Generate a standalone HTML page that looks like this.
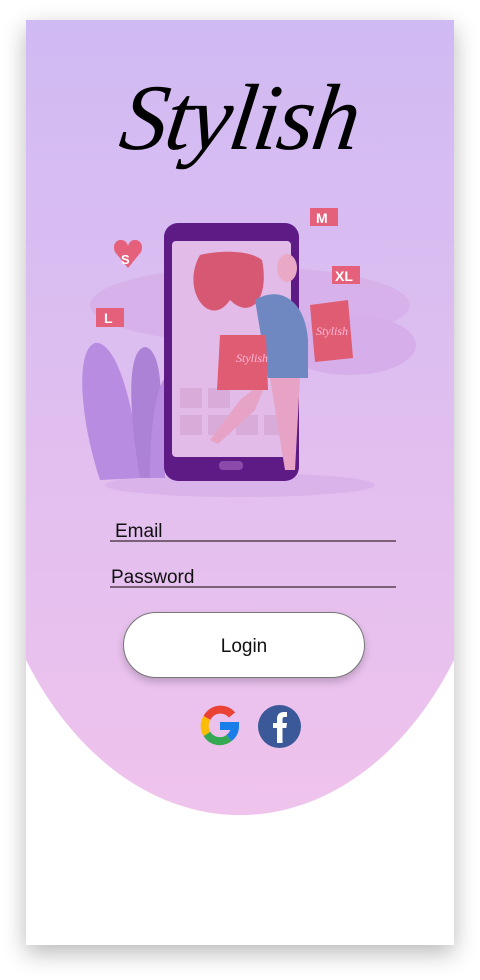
<!DOCTYPE html>
<html><head><meta charset="utf-8"><style>
html,body{margin:0;padding:0;background:#fff;width:480px;height:980px;overflow:hidden;font-family:"Liberation Sans",sans-serif}
.card{position:absolute;left:26px;top:20px;width:428px;height:925px;background:#fff;box-shadow:0 8px 22px rgba(0,0,0,.28);overflow:hidden}
.bg{position:absolute;left:0;top:0;width:428px;height:800px;background:linear-gradient(#d0baf3,#efc3ec);clip-path:path("M0 0 H428 V640 A260 359 0 0 1 0 640 Z")}
.logo{position:absolute;left:0;width:428px;top:44px;text-align:center;font-family:"Liberation Serif",serif;font-style:italic;font-size:94px;color:#000;letter-spacing:-2px;transform:skewX(-8deg)}
.lbl{position:absolute;font-size:19px;color:#111}
.line{position:absolute;left:84px;width:286px;height:2px;background:#7a6178}
.btn{position:absolute;left:97px;top:592px;width:240px;height:64px;border:1px solid #777;border-radius:33px;background:#fff;box-shadow:0 4px 8px rgba(0,0,0,.2);text-align:center;line-height:68px;font-size:19px;color:#111}
</style></head><body>
<div class="card">
<div class="bg"></div>
<div class="logo">Stylish</div>
<svg style="position:absolute;left:54px;top:180px" width="340" height="300" viewBox="80 200 340 300">
<ellipse cx="250" cy="305" rx="160" ry="38" fill="#d6aee9" opacity=".8"/>
<ellipse cx="350" cy="345" rx="66" ry="30" fill="#d6aee9"/>
<ellipse cx="240" cy="485" rx="135" ry="12" fill="#d9b3ea"/>
<path d="M100 480 C80 420 75 350 95 343 C115 340 135 400 140 478Z" fill="#b88ce0"/>
<path d="M140 478 C130 420 125 350 145 347 C165 350 165 420 150 478Z" fill="#ab82d6"/>
<path d="M150 478 C150 430 155 390 165 378 L165 478Z" fill="#b88ce0"/>
<rect x="164" y="223" width="135" height="258" rx="14" fill="#5e1b85"/>
<rect x="172" y="241" width="119" height="216" rx="4" fill="#e3bbe8"/>
<rect x="219" y="461" width="24" height="9" rx="4" fill="#8a4aaa"/>
<g fill="#d9abd9"><rect x="180" y="388" width="22" height="20"/><rect x="208" y="388" width="22" height="20"/><rect x="180" y="415" width="22" height="20"/><rect x="208" y="415" width="22" height="20"/><rect x="236" y="415" width="22" height="20"/><rect x="264" y="415" width="22" height="20"/></g>
<path d="M200 255 C180 290 210 330 230 300 C250 320 270 300 262 260 C250 250 220 250 200 255Z" fill="#d65873"/>
<ellipse cx="287" cy="268" rx="10" ry="14" fill="#e9a9c6"/>
<path d="M255 300 C280 285 305 300 308 340 L308 378 L268 378 Z" fill="#6f88c2"/>
<path d="M270 378 L300 378 L295 470 L285 470 Z M268 378 L240 400 L210 440 L218 444 L255 410Z" fill="#e6a3c6"/>
<path d="M220 335 L266 335 L268 390 L217 390 Z" fill="#e05c72"/>
<path d="M310 305 L348 300 L353 358 L315 362Z" fill="#e05c72"/>
<text x="236" y="362" font-family="Liberation Serif" font-style="italic" font-size="12" fill="#fbd">Stylish</text>
<text x="316" y="335" font-family="Liberation Serif" font-style="italic" font-size="12" fill="#fbd">Stylish</text>
<path d="M128 268 L115 252 C110 240 125 235 128 246 C131 235 146 240 141 252Z" fill="#e5607a"/>
<text x="121" y="264" font-size="13" font-weight="bold" fill="#fff">S</text>
<rect x="310" y="208" width="28" height="18" fill="#e5607a"/><text x="316" y="223" font-size="14" font-weight="bold" fill="#fff">M</text>
<rect x="332" y="266" width="28" height="18" fill="#e5607a"/><text x="335" y="281" font-size="14" font-weight="bold" fill="#fff">XL</text>
<rect x="96" y="308" width="28" height="19" fill="#e5607a"/><text x="104" y="323" font-size="14" font-weight="bold" fill="#fff">L</text>
</svg>
<div class="lbl" style="left:89px;top:501px">Email</div>
<div class="line" style="top:520px"></div>
<div class="lbl" style="left:85px;top:547px">Password</div>
<div class="line" style="top:566px"></div>
<div class="btn">Login</div>
<svg style="position:absolute;left:173px;top:685px" width="42" height="42" viewBox="0 0 42 42">
<g fill="none" stroke-width="8">
<path d="M33 10 A15 15 0 0 0 8 13" stroke="#ea4335"/>
<path d="M8 13 A15 15 0 0 0 8 29" stroke="#fbbc05"/>
<path d="M8 29 A15 15 0 0 0 30 33" stroke="#34a853"/>
<path d="M30 33 A15 15 0 0 0 36 21 L21 21" stroke="#1a7ee8"/>
</g></svg>
<svg style="position:absolute;left:232px;top:685px" width="43" height="43" viewBox="0 0 43 43">
<circle cx="21.5" cy="21.5" r="21.5" fill="#3b5998"/>
<path d="M19 38 V23 H15 V18 H19 V14 C19 9 22 7 26 7 H29 V12 H26.5 C25 12 24.5 13 24.5 14.5 V18 H29 L28.3 23 H24.5 V38Z" fill="#fff"/>
</svg>
</div>
</body></html>
